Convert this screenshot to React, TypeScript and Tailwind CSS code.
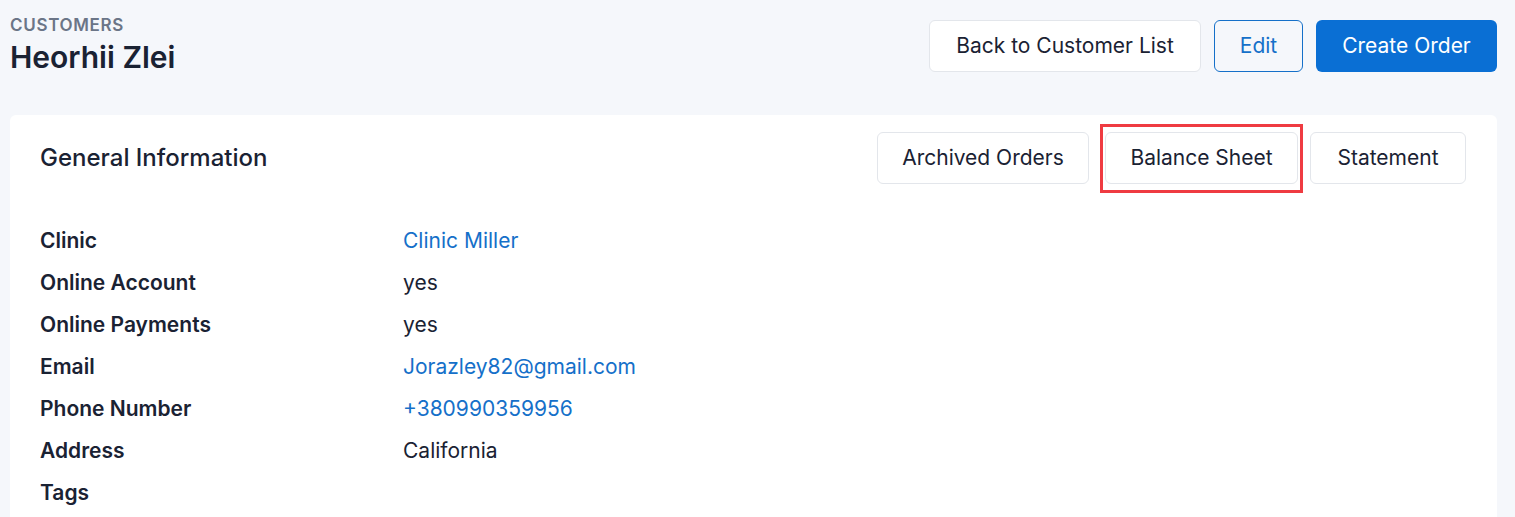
import React from 'react'

interface InfoRow { label: string; value: string; link?: boolean }

const rows: InfoRow[] = [
  { label: 'Clinic', value: 'Clinic Miller', link: true },
  { label: 'Online Account', value: 'yes' },
  { label: 'Online Payments', value: 'yes' },
  { label: 'Email', value: 'Jorazley82@gmail.com', link: true },
  { label: 'Phone Number', value: '+380990359956', link: true },
  { label: 'Address', value: 'California' },
  { label: 'Tags', value: '' },
]

const btnBase = 'h-[52px] rounded-md text-[21px] flex items-center justify-center whitespace-nowrap'

export default function App() {
  return (
    <div className="h-screen overflow-hidden bg-[#f5f7fb] text-[#1a2233] font-['Inter',sans-serif] pl-[10px] pr-[18px] pt-[20px]">
      {/* Header */}
      <div className="flex items-start justify-between">
        <div>
          <p className="text-[17px] font-semibold tracking-[0.04em] text-[#6b7587] uppercase leading-none -mt-[3px]">Customers</p>
          <h1 className="text-[30px] font-semibold leading-tight mt-[5px]">Heorhii Zlei</h1>
        </div>
        <div className="flex gap-[13px]">
          <button className={`${btnBase} bg-white border border-[#e3e6eb] w-[272px]`}>Back to Customer List</button>
          <button className={`${btnBase} border border-[#1570c9] text-[#1570c9] w-[89px]`}>Edit</button>
          <button className={`${btnBase} bg-[#0a6fd4] text-white w-[181px]`}>Create Order</button>
        </div>
      </div>

      {/* Card */}
      <div className="mt-[38px] bg-white rounded-md pl-[30px] pr-[31px] pt-[17px] pb-2">
        <div className="flex items-center justify-between">
          <h2 className="text-[24px] font-medium">General Information</h2>
          <div className="flex items-center">
            <button className={`${btnBase} bg-white border border-[#e3e6eb] w-[212px]`}>Archived Orders</button>
            <div className="relative ml-[16px]">
              <button className={`${btnBase} bg-white border border-[#e3e6eb] w-[193px]`}>Balance Sheet</button>
              <span className="absolute -left-[5px] -right-[5px] -top-[8px] -bottom-[9px] border-[3px] border-[#ef3b41] pointer-events-none" />
            </div>
            <button className={`${btnBase} bg-white border border-[#e3e6eb] w-[156px] ml-[12px]`}>Statement</button>
          </div>
        </div>

        <div className="mt-[36px] flex flex-col">
          {rows.map(r => (
            <div key={r.label} className="flex h-[42px] items-center text-[21px]">
              <span className="w-[363px] font-semibold">{r.label}</span>
              <span className={r.link ? 'text-[#1570c9]' : ''}>{r.value}</span>
            </div>
          ))}
        </div>
      </div>
    </div>
  )
}
